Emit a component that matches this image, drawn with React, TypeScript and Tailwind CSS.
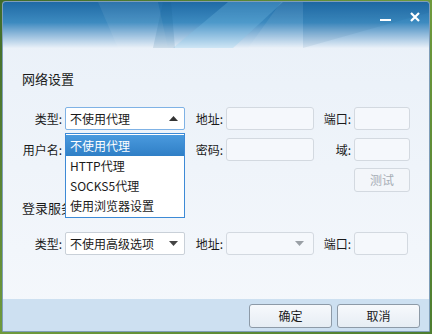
import { ReactNode } from "react"

const font = { fontFamily: '"Noto Sans CJK SC", "Liberation Sans", sans-serif' }

const Label = ({ w, children }: { w: string; children: ReactNode }) => (
  <div className={`${w} shrink-0 pr-[3px] text-right text-[12px] text-[#1a1a1a]`}>{children}</div>
)

const Box = ({ w, children }: { w: string; children?: ReactNode }) => (
  <div className={`${w} h-[23px] shrink-0 rounded-[3px] border border-[#d3d9e0] bg-[#f5f8fc]`}>{children}</div>
)

const Caret = ({ up, color }: { up?: boolean; color: string }) => (
  <svg width="9" height="5" viewBox="0 0 9 5" className="shrink-0">
    <path d={up ? "M0 5 L4.5 0 L9 5 Z" : "M0 0 L9 0 L4.5 5 Z"} fill={color} />
  </svg>
)

export default function App() {
  return (
    <div className="h-[334px] w-[432px] overflow-hidden bg-gradient-to-br from-[#3f6b2a] via-[#6f9a3c] to-[#4d7d2f] pl-[2px] pt-[1px]" style={font}>
      <div className="relative flex h-[331px] w-[428px] flex-col overflow-hidden rounded-t-[3px] border border-[#7f9db8] bg-gradient-to-b from-[#e9f0f8] to-[#f5f8fc]">
        {/* title bar */}
        <div className="relative h-[46px] shrink-0 bg-gradient-to-b from-[#1f6aa5] via-[#3d8bc0] via-45% to-[#e9f0f8]">
          <svg className="absolute inset-0" width="428" height="46" viewBox="0 0 428 46">
            <polygon points="95,0 155,0 165,46 115,46" fill="#ffffff" opacity="0.07" />
            <polygon points="160,0 168,0 172,46 150,46" fill="#0c4f86" opacity="0.12" />
            <polygon points="225,0 280,0 230,46 170,46" fill="#7fc6ec" opacity="0.25" />
            <polygon points="278,0 300,0 300,46 245,46" fill="#ffffff" opacity="0.08" />
            <polygon points="300,0 428,0 428,10 300,46" fill="#0b4a80" opacity="0.08" />
          </svg>
          <div className="absolute left-[377px] top-[17px] h-[2px] w-[11px] bg-white" />
          <svg className="absolute left-[407px] top-[10px]" width="10" height="10" viewBox="0 0 10 10">
            <path d="M1 1 L9 9 M9 1 L1 9" stroke="#fff" strokeWidth="2.2" />
          </svg>
        </div>

        {/* content */}
        <div className="flex-1">
          <div className="ml-[19px] mt-[22px] text-[13px] leading-[18px] text-[#1a1a1a]">网络设置</div>

          <div className="mt-[19px] flex items-center">
            <Label w="w-[62px]">类型:</Label>
            <div className="flex h-[23px] w-[120px] shrink-0 items-center justify-between rounded-[2px] border border-[#7fb2e5] bg-white pl-[4px] pr-[6px] text-[12px] text-[#1a1a1a]">
              <span>不使用代理</span>
              <Caret up color="#333" />
            </div>
            <Label w="w-[41px]">地址:</Label>
            <Box w="w-[88px]" />
            <Label w="w-[40px]">端口:</Label>
            <Box w="w-[56px]" />
          </div>

          <div className="mt-[8px] flex items-center">
            <Label w="w-[62px]">用户名:</Label>
            <div className="w-[120px] shrink-0" />
            <Label w="w-[41px]">密码:</Label>
            <Box w="w-[88px]" />
            <Label w="w-[40px]">域:</Label>
            <Box w="w-[56px]" />
          </div>

          <div className="mt-[7px] flex">
            <div className="ml-[351px] flex h-[24px] w-[56px] items-center justify-center rounded-[3px] border border-[#d3d9e0] bg-[#f3f6fa] text-[12px] text-[#a6adb5]">
              测试
            </div>
          </div>

          <div className="ml-[19px] mt-[7px] text-[13px] leading-[18px] text-[#1a1a1a]">登录服务器</div>

          <div className="mt-[15px] flex items-center">
            <Label w="w-[62px]">类型:</Label>
            <div className="flex h-[23px] w-[120px] shrink-0 items-center justify-between rounded-[2px] border border-[#c9d0d8] bg-white pl-[4px] pr-[6px] text-[12px] text-[#1a1a1a]">
              <span>不使用高级选项</span>
              <Caret color="#444" />
            </div>
            <Label w="w-[41px]">地址:</Label>
            <div className="flex h-[23px] w-[88px] shrink-0 items-center justify-end rounded-[3px] border border-[#d3d9e0] bg-[#f5f8fc] pr-[9px]">
              <Caret color="#9aa0a6" />
            </div>
            <Label w="w-[40px]">端口:</Label>
            <Box w="w-[54px]" />
          </div>
        </div>

        {/* footer */}
        <div className="flex h-[32px] shrink-0 items-start justify-end gap-[5px] bg-[#cde0f1] pr-[9px] pt-[5px]">
          {["确定", "取消"].map((t) => (
            <div
              key={t}
              className="flex h-[24px] w-[83px] items-center justify-center rounded-[3px] border border-[#8d9aa7] bg-gradient-to-b from-[#f7f9fc] to-[#e6edf4] text-[12px] text-[#1a1a1a]"
            >
              {t}
            </div>
          ))}
        </div>

        {/* open dropdown */}
        <div className="absolute left-[62px] top-[131px] w-[120px] border border-[#3d8ad6] bg-white py-[1px] text-[12px] text-[#1a1a1a]">
          <div className="flex h-[21px] items-center bg-gradient-to-b from-[#4a9ade] to-[#2f7fc6] pl-[4px] text-white">不使用代理</div>
          <div className="flex h-[20px] items-center pl-[4px]">HTTP代理</div>
          <div className="flex h-[20px] items-center pl-[4px]">SOCKS5代理</div>
          <div className="flex h-[20px] items-center pl-[4px]">使用浏览器设置</div>
        </div>
      </div>
    </div>
  )
}
